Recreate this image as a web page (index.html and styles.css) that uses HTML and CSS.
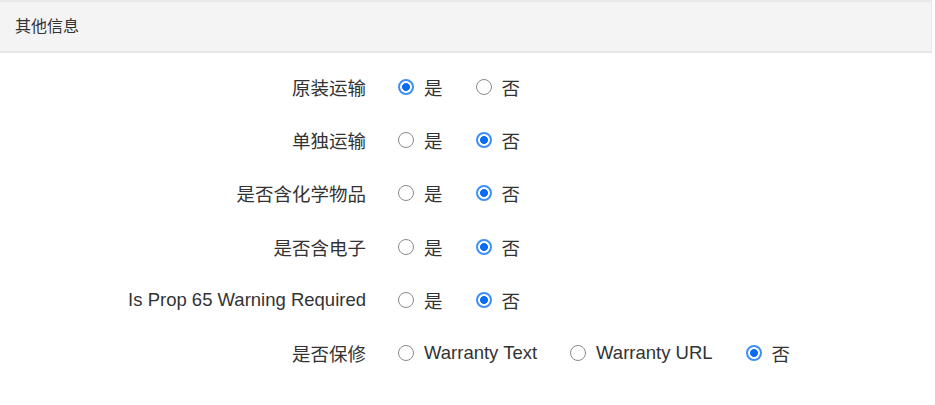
FILE: index.html
```html
<!DOCTYPE html>
<html>
<head>
<meta charset="utf-8">
<link rel="stylesheet" href="styles.css">
</head>
<body>
<div class="panel">
  <div class="panel-head">其他信息</div>
  <div class="panel-body">
    <div class="row">
      <div class="label">原装运输</div>
      <div class="options">
        <label class="opt"><input type="radio" name="r1" checked><span>是</span></label>
        <label class="opt"><input type="radio" name="r1"><span>否</span></label>
      </div>
    </div>
    <div class="row">
      <div class="label">单独运输</div>
      <div class="options">
        <label class="opt"><input type="radio" name="r2"><span>是</span></label>
        <label class="opt"><input type="radio" name="r2" checked><span>否</span></label>
      </div>
    </div>
    <div class="row">
      <div class="label">是否含化学物品</div>
      <div class="options">
        <label class="opt"><input type="radio" name="r3"><span>是</span></label>
        <label class="opt"><input type="radio" name="r3" checked><span>否</span></label>
      </div>
    </div>
    <div class="row">
      <div class="label">是否含电子</div>
      <div class="options">
        <label class="opt"><input type="radio" name="r4"><span>是</span></label>
        <label class="opt"><input type="radio" name="r4" checked><span>否</span></label>
      </div>
    </div>
    <div class="row">
      <div class="label">Is Prop 65 Warning Required</div>
      <div class="options">
        <label class="opt"><input type="radio" name="r5"><span>是</span></label>
        <label class="opt"><input type="radio" name="r5" checked><span>否</span></label>
      </div>
    </div>
    <div class="row">
      <div class="label">是否保修</div>
      <div class="options">
        <label class="opt"><input type="radio" name="r6"><span>Warranty Text</span></label>
        <label class="opt"><input type="radio" name="r6"><span>Warranty URL</span></label>
        <label class="opt"><input type="radio" name="r6" checked><span>否</span></label>
      </div>
    </div>
  </div>
</div>
</body>
</html>
```

FILE: styles.css
```css
html, body {
  margin: 0;
  padding: 0;
  background: #fff;
}
body {
  font-family: "Liberation Sans", "Noto Sans CJK SC", sans-serif;
  color: #333;
}
.panel {
  width: 932px;
}
.panel-head {
  height: 49px;
  box-sizing: content-box;
  border-top: 2px solid #e9e9e9;
  border-bottom: 2px solid #e6e6e6;
  border-right: 1px solid #e9e9e9;
  background: #f4f4f4;
  padding-left: 15px;
  font-size: 16px;
  line-height: 49px;
  color: #333;
}
.panel-body {
  padding-top: 7px;
}
.row {
  display: flex;
  align-items: center;
  height: 53.3px;
  font-size: 18.5px;
}
.label {
  width: 366px;
  text-align: right;
  white-space: nowrap;
}
.options {
  display: flex;
  align-items: center;
  margin-left: 32px;
  gap: 33px;
}
.opt {
  display: flex;
  align-items: center;
}
.opt input {
  -webkit-appearance: none;
  appearance: none;
  flex: none;
  box-sizing: border-box;
  margin: 0 10px 0 0;
  width: 16px;
  height: 16px;
  border: 1.6px solid #8a8a8a;
  border-radius: 50%;
  background: #fff;
}
.opt input:checked {
  border: 2.2px solid #3f8ff7;
  background: radial-gradient(circle, #0a6cf2 0, #0a6cf2 3.6px, #fff 4.3px);
}
```
